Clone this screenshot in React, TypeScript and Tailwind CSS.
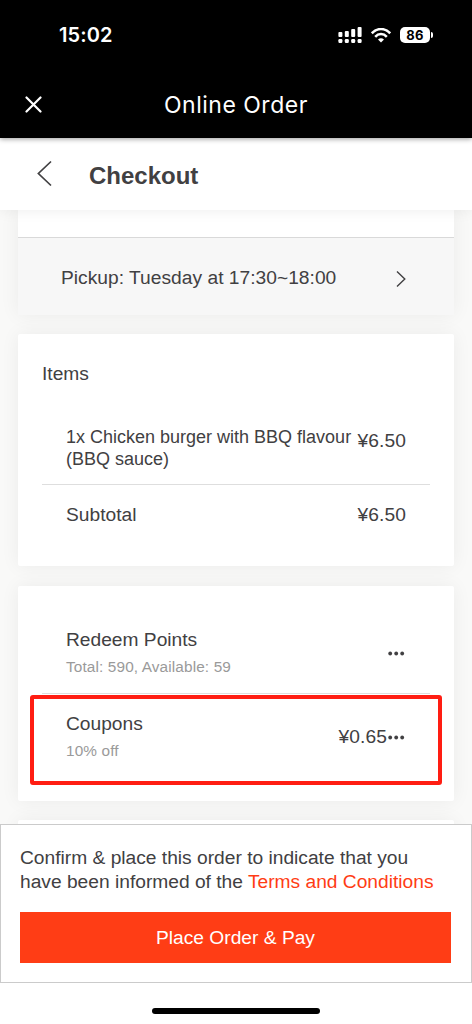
import type { ReactNode } from "react";

const cardShadow = "shadow-[0_0_19px_rgba(0,0,0,0.06)]";

function StatusBar() {
  return (
    <div className="flex h-[70px] items-center justify-between pl-[59px] pr-[39px] text-white">
      <span className="font-[Inter] text-[20px] font-semibold leading-6 tracking-[0.1px]">15:02</span>
      <div className="flex items-center gap-[9px]">
        <svg width="24" height="16" viewBox="0 0 24 16" fill="currentColor">
          {[0, 1, 2, 3].map((i) => (
            <g key={i}>
              <rect x={0.4 + i * 6.4} y={[5, 4, 2, 0][i]} width="4" height={[5, 6, 8, 10][i]} rx="1" />
              <rect x={0.4 + i * 6.4} y="12" width="4" height="4" rx="1.2" />
            </g>
          ))}
        </svg>
        <svg width="20" height="15" viewBox="0 0 20 15" fill="none" stroke="currentColor">
          <path d="M0.8 5.3C6 -0.4 14 -0.4 19.2 5.3" strokeWidth="2.5" />
          <path d="M4.2 8.8C7.5 5.2 12.5 5.2 15.8 8.8" strokeWidth="2.5" />
          <path d="M10 14.6 7 11.6Q10 8.9 13 11.6Z" fill="currentColor" stroke="none" />
        </svg>
        <div className="flex items-center gap-px">
          <div className="flex h-4 w-[30px] items-center justify-center rounded-[5px] bg-white font-[Inter] text-[13px] font-bold leading-none tracking-[0.2px] text-black">
            86
          </div>
          <div className="h-1.5 w-0.5 rounded-r-full bg-white" />
        </div>
      </div>
    </div>
  );
}

function Row({ children, className = "" }: { children: ReactNode; className?: string }) {
  return <div className={"flex justify-between px-6 " + className}>{children}</div>;
}

function Dots() {
  return (
    <svg width="17" height="5" viewBox="0 0 17 5" fill="#414042">
      <circle cx="2.2" cy="2.5" r="1.9" />
      <circle cx="8.2" cy="2.5" r="1.9" />
      <circle cx="14.2" cy="2.5" r="1.9" />
    </svg>
  );
}

export default function App() {
  return (
    <div className="flex h-[1024px] w-[472px] flex-col overflow-hidden bg-white font-['Liberation_Sans',Arial,sans-serif] text-[19.2px] leading-6 text-[#414042]">
      <header className="relative z-20 h-[138px] shrink-0 bg-black text-white shadow-[0_1px_5px_rgba(0,0,0,0.4)]">
        <StatusBar />
        <div className="flex h-[68px] items-center pl-[25px]">
          <svg width="17" height="17" viewBox="0 0 17 17" fill="none" stroke="currentColor" strokeWidth="2.2" strokeLinecap="round">
            <path d="M1.5 1.5 15.5 15.5M15.5 1.5 1.5 15.5" />
          </svg>
          <h1 className="ml-[122px] mt-0.5 whitespace-nowrap font-[Inter] text-[23px] font-normal leading-7 tracking-[0.5px]">Online Order</h1>
        </div>
      </header>

      <nav className="relative z-10 flex h-[72px] shrink-0 items-center bg-white pl-9 shadow-[0_0_14px_rgba(0,0,0,0.08)]">
        <svg width="17" height="28" viewBox="0 0 17 28" fill="none" stroke="#414042" strokeWidth="1.7">
          <path d="M15 1.5 2.4 13.5 15 25.5" />
        </svg>
        <h2 className="ml-9 mt-1 text-[24px] font-bold leading-7">Checkout</h2>
      </nav>

      <main className="flex min-h-0 flex-1 flex-col gap-[19px] overflow-hidden bg-[#f9f9f8] px-[18px]">
        <section className={"h-[105px] shrink-0 bg-white " + cardShadow}>
          <div className="h-7 border-b border-[#d9d9d9]" />
          <div className="flex h-[77px] items-center justify-between bg-[#f7f7f7] pl-[43px] pr-12 pt-[3px]">
            <span className="whitespace-nowrap tracking-[0.02px]">Pickup: Tuesday at 17:30~18:00</span>
            <svg className="mt-px" width="10" height="18" viewBox="0 0 10 18" fill="none" stroke="#414042" strokeWidth="1.4">
              <path d="M1 1.5 8.8 9 1 16.5" />
            </svg>
          </div>
        </section>

        <section className={"h-[232px] shrink-0 rounded-[2px] bg-white px-6 pt-7 " + cardShadow}>
          <h3>Items</h3>
          <Row className="mt-[39px] h-[60px] border-b border-[#dedede]">
            <p className="whitespace-nowrap pt-px text-[18px] leading-[22px]">
              1x Chicken burger with BBQ flavour
              <br />
              (BBQ sauce)
            </p>
            <span className="pt-1 tracking-[0.1px]">¥6.50</span>
          </Row>
          <Row className="pt-[18px]">
            <span>Subtotal</span>
            <span className="tracking-[0.1px]">¥6.50</span>
          </Row>
        </section>

        <section className={"relative mt-px h-[215px] shrink-0 rounded-[2px] bg-white px-6 pt-[42px] " + cardShadow}>
          <Row className="h-[66px] border-b border-[#dedede]">
            <div>
              <div>Redeem Points</div>
              <div className="mt-[3px] text-[15.36px] tracking-[0.12px] text-[#9a9a9a]">Total: 590, Available: 59</div>
            </div>
            <div className="mr-px pt-[23px]">
              <Dots />
            </div>
          </Row>
          <Row className="pt-[18px]">
            <div>
              <div>Coupons</div>
              <div className="mt-[3px] text-[15.36px] tracking-[0.12px] text-[#9a9a9a]">10% off</div>
            </div>
            <div className="mr-px flex h-6 translate-y-[13px] items-center">
              <span className="mr-px tracking-[0.1px]">¥0.65</span>
              <Dots />
            </div>
          </Row>
          <div className="absolute left-3 top-[109px] h-[90px] w-[412px] rounded-[3px] border-4 border-[#ff1d12]" />
        </section>

        <section className={"h-10 shrink-0 rounded-[2px] bg-white " + cardShadow} />
      </main>

      <footer className="relative z-10 flex h-[200px] shrink-0 flex-col items-center bg-white">
        <div className="h-[159px] w-full border border-[#cbcbcb] pl-[19px] pt-[21px]">
          <p className="whitespace-nowrap">
            Confirm &amp; place this order to indicate that you
            <br />
            have been informed of the <a className="text-[#ff3c14]">Terms and Conditions</a>
          </p>
          <button className="mt-[18px] block h-[51px] w-[431px] bg-[#ff3d15] text-white">Place Order &amp; Pay</button>
        </div>
        <div className="mt-[25px] h-1.5 w-[168px] rounded-full bg-black" />
      </footer>
    </div>
  );
}
